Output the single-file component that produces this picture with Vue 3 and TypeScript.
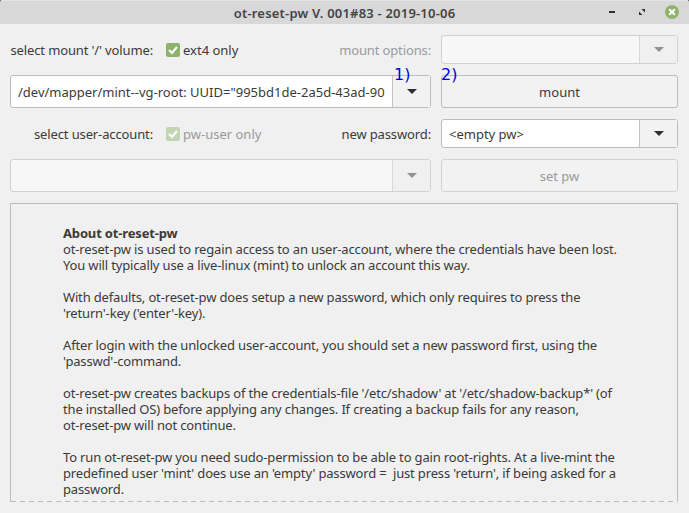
<template>
  <div class="window">
    <header class="titlebar">
      <span class="title">ot-reset-pw V. 001#83 - 2019-10-06</span>
      <div class="win-btns">
        <svg width="12" height="12" viewBox="0 0 12 12"><rect x="4" y="5" width="6" height="2" fill="#2f2f2f" /></svg>
        <svg width="12" height="12" viewBox="0 0 12 12">
          <path d="M6.5 3H10v3.5zM4 5.5L7.5 9H4z" fill="#2f2f2f" />
        </svg>
        <span class="close">
          <svg width="10" height="10" viewBox="0 0 10 10"><path d="M2.2 2.2l5.6 5.6M7.8 2.2l-5.6 5.6" stroke="#fff" stroke-width="2" /></svg>
        </span>
      </div>
    </header>

    <main class="content">
      <div class="form">
        <div class="label-row">
          <label class="lbl">select mount '/' volume:</label>
          <span class="check"><svg width="14" height="14" viewBox="0 0 14 14"><path d="M3 7l3 3 5-6" fill="none" stroke="#fff" stroke-width="2" /></svg></span>
          <span class="check-text">ext4 only</span>
          <label class="lbl-end dim">mount options:</label>
        </div>
        <div class="combo off short">
          <span class="combo-text"></span>
          <span class="arrow"><i></i></span>
        </div>

        <div class="combo tall">
          <span class="combo-text">/dev/mapper/mint--vg-root: UUID="995bd1de-2a5d-43ad-90</span>
          <span class="arrow"><i></i></span>
          <span class="step">1)</span>
        </div>
        <button class="btn tall">
          mount
          <span class="step step2">2)</span>
        </button>

        <div class="label-row">
          <label class="lbl">select user-account:</label>
          <span class="check off"><svg width="14" height="14" viewBox="0 0 14 14"><path d="M3 7l3 3 5-6" fill="none" stroke="#fff" stroke-width="2" /></svg></span>
          <span class="check-text dim">pw-user only</span>
          <label class="lbl-end">new password:</label>
        </div>
        <div class="combo short">
          <span class="combo-text">&lt;empty pw&gt;</span>
          <span class="arrow"><i></i></span>
        </div>

        <div class="combo off tall">
          <span class="combo-text"></span>
          <span class="arrow"><i></i></span>
        </div>
        <button class="btn off tall">set pw</button>
      </div>

      <section class="about">
        <p v-for="(para, i) in about" :key="i"><b v-if="para.head">{{ para.head }}</b>{{ para.text }}</p>
      </section>
    </main>
  </div>
</template>

<script setup lang="ts">
interface Para {
  head?: string
  text: string
}

const about: Para[] = [
  {
    head: 'About ot-reset-pw\n',
    text: 'ot-reset-pw is used to regain access to an user-account, where the credentials have been lost.\nYou will typically use a live-linux (mint) to unlock an account this way.',
  },
  {
    text: "With defaults, ot-reset-pw does setup a new password, which only requires to press the\n'return'-key ('enter'-key).",
  },
  {
    text: "After login with the unlocked user-account, you should set a new password first, using the\n'passwd'-command.",
  },
  {
    text: "ot-reset-pw creates backups of the credentials-file '/etc/shadow' at '/etc/shadow-backup*' (of\nthe installed OS) before applying any changes. If creating a backup fails for any reason,\not-reset-pw will not continue.",
  },
  {
    text: "To run ot-reset-pw you need sudo-permission to be able to gain root-rights. At a live-mint the\npredefined user 'mint' does use an 'empty' password =  just press 'return', if being asked for a\npassword.",
  },
]
</script>

<style>
html,
body {
  margin: 0;
  background: #f0f0f0;
}
</style>

<style scoped>
.window {
  width: 689px;
  height: 513px;
  overflow: hidden;
  background: #303030;
  color: #3a3a3a;
  font-family: "Noto Sans", sans-serif;
  font-size: 13px;
}
.titlebar {
  position: relative;
  display: flex;
  justify-content: center;
  align-items: center;
  height: 24px;
  background: #d8d8d8;
  border-top: 1px solid #e4e4e4;
  border-radius: 2px 2px 0 0;
  box-sizing: border-box;
}
.title {
  font-weight: 600;
  color: #444;
  letter-spacing: 0.2px;
}
.win-btns {
  position: absolute;
  right: 10px;
  top: 4px;
  display: flex;
  align-items: center;
  gap: 18px;
}
.close {
  display: flex;
  align-items: center;
  justify-content: center;
  width: 14px;
  height: 14px;
  border-radius: 50%;
  background: #8fb26b;
}
.content {
  height: 489px;
  box-sizing: border-box;
  padding: 11px 11px 0 10px;
  background: #f0f0f0;
}
.form {
  display: grid;
  grid-template-columns: 421px 237px;
  grid-template-rows: 29px 33px 29px 33px;
  column-gap: 10px;
  row-gap: 11px;
}
.label-row {
  display: flex;
  align-items: center;
}
.lbl {
  width: 143px;
  text-align: right;
  white-space: nowrap;
  letter-spacing: -0.13px;
}
.lbl-end {
  margin-left: auto;
  white-space: nowrap;
  letter-spacing: -0.13px;
}
.dim {
  color: #9a9a9a;
}
.check {
  display: flex;
  width: 14px;
  height: 14px;
  margin-left: 13px;
  border-radius: 2px;
  background: #8fb26b;
}
.check.off {
  background: #c3d4b3;
}
.check-text {
  margin-left: 3px;
}
.combo {
  position: relative;
  display: flex;
  box-sizing: border-box;
  border: 1px solid #bcbcbc;
  border-radius: 3px;
  background: #fff;
}
.combo-text {
  flex: 1;
  display: flex;
  align-items: center;
  padding-left: 7px;
  white-space: nowrap;
  overflow: hidden;
}
.arrow {
  display: flex;
  align-items: center;
  justify-content: center;
  width: 37px;
  border-left: 1px solid #c4c4c4;
  background: #f2f2f2;
}
.arrow i {
  width: 0;
  height: 0;
  border-left: 5px solid transparent;
  border-right: 5px solid transparent;
  border-top: 5px solid #303030;
}
.combo.off {
  border-color: #d2d2d2;
  background: #f7f7f7;
}
.combo.off .arrow {
  border-left-color: #d8d8d8;
  background: #f0f0f0;
}
.combo.off .arrow i {
  border-top-color: #929292;
}
.btn {
  position: relative;
  box-sizing: border-box;
  padding: 0;
  border: 1px solid #bcbcbc;
  border-radius: 3px;
  background: #f2f2f2;
  color: #3a3a3a;
  font: inherit;
}
.btn.off {
  border-color: #d2d2d2;
  color: #9a9a9a;
}
.step {
  position: absolute;
  left: 383px;
  top: -10px;
  color: #0000e0;
  font-family: "DejaVu Sans", sans-serif;
  font-size: 16px;
  line-height: 18px;
}
.step2 {
  left: -1px;
}
.about {
  position: relative;
  box-sizing: border-box;
  height: 299px;
  margin-top: 11px;
  padding: 21px 0 0 52px;
  border: 1px solid #bcbcbc;
  border-bottom: 0;
  overflow: hidden;
  line-height: 16px;
  white-space: pre;
  letter-spacing: -0.16px;
}
.about::after {
  content: "";
  position: absolute;
  left: 0;
  right: 0;
  bottom: 0;
  height: 1px;
  background: repeating-linear-gradient(90deg, #bcbcbc 0 5px, transparent 5px 9px);
}
.about p {
  margin: 0 0 16px;
}
.about b {
  font-weight: 700;
}
</style>
